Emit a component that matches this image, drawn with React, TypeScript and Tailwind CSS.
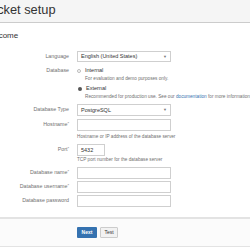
import React from "react";

const Label = ({ children, req }: { children: React.ReactNode; req?: boolean }) => (
  <div className="w-[73px] shrink-0 pr-[4px] text-right text-[5.3px] text-[#707070] leading-none">
    {children}
    {req && <sup className="text-[4px] text-[#707070] relative top-[-1px]">*</sup>}
  </div>
);

const Input = ({ value, w = "w-[94px]" }: { value?: string; w?: string }) => (
  <div className={`${w} h-[12px] border border-[#cfcfcf] bg-white flex items-center px-[3px] text-[5.5px] text-[#333]`}>
    {value}
  </div>
);

const Select = ({ value }: { value: string }) => (
  <div className="w-[94px] h-[11px] border border-[#cfcfcf] bg-white flex items-center justify-between px-[3px] text-[5.5px] text-[#333]">
    <span>{value}</span>
    <span className="text-[4px] text-[#777]">▼</span>
  </div>
);

const Help = ({ children }: { children: React.ReactNode }) => (
  <div className="flex h-[9px] items-center">
    <div className="w-[77px] shrink-0" />
    <div className="text-[4.7px] text-[#707070] whitespace-nowrap leading-none">{children}</div>
  </div>
);

export default function App() {
  return (
    <div
      className="w-[250px] h-[250px] overflow-hidden bg-white"
      style={{ fontFamily: '"Liberation Sans", Arial, sans-serif' }}
    >
      <div className="h-[23px] bg-[#f5f5f5] border-b border-[#cccccc] flex items-center overflow-hidden">
        <div className="ml-[-32px] text-[12.8px] text-[#333] whitespace-nowrap leading-none pb-[1px]">Bitbucket setup</div>
      </div>
      <div className="mt-[9px] h-[8px] overflow-hidden">
        <div className="ml-[-15px] text-[8px] leading-none text-[#333] whitespace-nowrap">Welcome</div>
      </div>

      <div className="mt-[11px] flex h-[11px] items-center">
        <Label>Language</Label>
        <div className="ml-[4px]"><Select value="English (United States)" /></div>
      </div>

      <div className="mt-[4px] flex h-[9px] items-center">
        <Label>Database</Label>
        <div className="ml-[4px] flex items-center">
          <span className="w-[4px] h-[4px] rounded-full border border-[#bbb] bg-white mr-[4px]" />
          <span className="text-[5.5px] text-[#333] leading-none">Internal</span>
        </div>
      </div>
      <Help>
        <span className="ml-[8px]">For evaluation and demo purposes only.</span>
      </Help>
      <div className="flex h-[9px] items-center">
        <div className="w-[77px] shrink-0" />
        <span className="w-[4px] h-[4px] rounded-full bg-[#555] mr-[4px] ml-[1px]" />
        <span className="text-[5.5px] text-[#333] leading-none">External</span>
      </div>
      <Help>
        <span className="ml-[8px]">
          Recommended for production use. See our <span className="text-[#3572b0]">documentation</span> for more information.
        </span>
      </Help>

      <div className="mt-[2px] flex h-[12px] items-center">
        <Label>Database Type</Label>
        <div className="ml-[4px]">
          <div className="w-[94px] h-[12px] border border-[#cfcfcf] bg-white flex items-center justify-between px-[3px] text-[5.5px] text-[#333]">
            <span>PostgreSQL</span>
            <span className="text-[4px] text-[#777]">▼</span>
          </div>
        </div>
      </div>

      <div className="mt-[3px] flex h-[12px] items-center">
        <Label req>Hostname</Label>
        <div className="ml-[4px]"><Input /></div>
      </div>
      <div className="mt-[2px]">
        <Help>Hostname or IP address of the database server</Help>
      </div>

      <div className="mt-[2px] flex h-[12px] items-center">
        <Label req>Port</Label>
        <div className="ml-[4px]"><Input value="5432" w="w-[28px]" /></div>
      </div>
      <Help>TCP port number for the database server</Help>

      <div className="mt-[2px] flex h-[12px] items-center">
        <Label req>Database name</Label>
        <div className="ml-[4px]"><Input /></div>
      </div>
      <div className="mt-[2px] flex h-[12px] items-center">
        <Label req>Database username</Label>
        <div className="ml-[4px]"><Input /></div>
      </div>
      <div className="mt-[2px] flex h-[12px] items-center">
        <Label>Database password</Label>
        <div className="ml-[4px]"><Input /></div>
      </div>

      <div className="mt-[10px] h-[30px] border-t-2 border-b border-[#e3e3e3] bg-[#fbfbfb] flex items-center pl-[77px] gap-[3px]">
        <div className="w-[20px] h-[11px] bg-[#3572b0] rounded-[1px] text-white text-[5px] font-bold flex items-center justify-center">Next</div>
        <div className="w-[18px] h-[11px] bg-[#f2f2f2] border border-[#cccccc] rounded-[1px] text-[#333] text-[5px] flex items-center justify-center">Test</div>
      </div>
    </div>
  );
}
